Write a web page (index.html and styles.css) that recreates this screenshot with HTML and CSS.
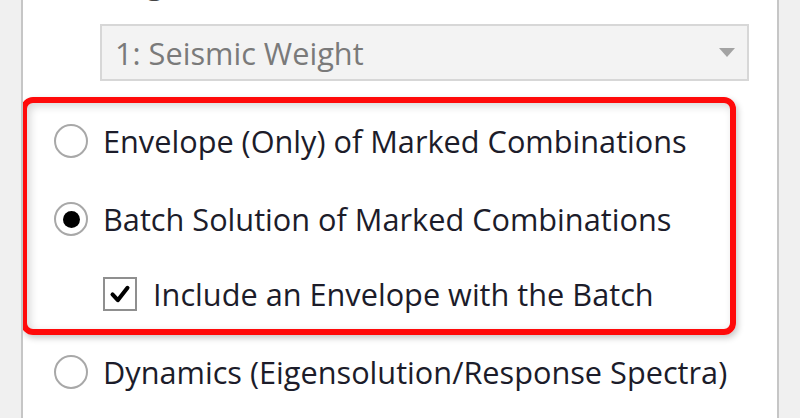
FILE: index.html
```html
<!DOCTYPE html>
<html lang="en">
<head>
    <meta charset="UTF-8">
    <title>Analysis Options</title>
    <link rel="stylesheet" href="styles.css">
</head>
<body>
    <div class="panel">
        <div class="group-label">Using</div>

        <div class="select">
            <span class="select-text">1: Seismic Weight</span>
            <span class="select-arrow"></span>
        </div>

        <div class="highlight">
            <div class="option row-first">
                <span class="radio"></span>
                <span class="option-text">Envelope (Only) of Marked Combinations</span>
            </div>
            <div class="option row-second">
                <span class="radio checked"></span>
                <span class="option-text">Batch Solution of Marked Combinations</span>
            </div>
            <div class="option row-check">
                <span class="checkbox">
                    <svg viewBox="0 0 34 34" width="34" height="34">
                        <path d="M8.5 17.5 L14.5 24 L25.5 10" fill="none" stroke="#000" stroke-width="4.6" stroke-linecap="round" stroke-linejoin="round"/>
                    </svg>
                </span>
                <span class="option-text">Include an Envelope with the Batch</span>
            </div>
        </div>

        <div class="option row-last">
            <span class="radio"></span>
            <span class="option-text">Dynamics (Eigensolution/Response Spectra)</span>
        </div>
    </div>
</body>
</html>
```

FILE: styles.css
```css
:root {
    --text-color: #1c1c2a;
    --muted-text: #7a7a7a;
    --panel-line: #c6c6c6;
    --control-border: #a8a8a8;
    --mark-red: #ff0a0a;
    --ui-font-size: 30.7px;
}

* {
    margin: 0;
    padding: 0;
    box-sizing: border-box;
}

body {
    background-color: #f0f0f0;
    font-family: 'Open Sans', 'Noto Sans', sans-serif;
    color: var(--text-color);
    overflow: hidden;
}

.panel {
    margin: 0 21px;
    height: 418px;
    overflow: hidden;
    background-color: white;
    border-left: 2px solid var(--panel-line);
    border-right: 2px solid var(--panel-line);
}

/* label above the dropdown, scrolled mostly out of view */
.group-label {
    height: 30px;
    margin-top: -30px;
    padding-left: 60px;
    font-size: var(--ui-font-size);
    line-height: 24px;
    color: #444;
}

.select {
    display: flex;
    align-items: center;
    justify-content: space-between;
    margin: 24px 0 0 77px;
    width: 649px;
    height: 57px;
    padding: 0 12px 0 13px;
    background-color: #f3f3f3;
    border: 2px solid #d7d7d7;
}

.select-text {
    font-size: var(--ui-font-size);
    color: var(--muted-text);
}

.select-arrow {
    width: 0;
    height: 0;
    border-left: 8px solid transparent;
    border-right: 8px solid transparent;
    border-top: 9px solid #a3a3a3;
}

.highlight {
    margin: 16px 0 0 -2px;
    width: 715px;
    height: 238px;
    border: 6px solid var(--mark-red);
    border-radius: 12px;
    box-shadow: inset 3px 3px 8px rgba(0,0,0,0.16), 2px 3px 6px rgba(0,0,0,0.22);
}

.option {
    display: flex;
    align-items: center;
    font-size: var(--ui-font-size);
}

.row-first {
    height: 76px;
    padding-left: 27px;
}

.row-second {
    height: 80px;
    padding-left: 27px;
}

.row-check {
    height: 70px;
    padding-left: 76px;
}

.row-last {
    height: 74px;
    padding-left: 31px;
}

.radio {
    flex: none;
    width: 34px;
    height: 34px;
    margin-right: 15px;
    border: 2px solid var(--control-border);
    border-radius: 50%;
    background-color: white;
    display: flex;
    align-items: center;
    justify-content: center;
}

.radio.checked::after {
    content: '';
    width: 17px;
    height: 17px;
    border-radius: 50%;
    background-color: #000;
}

.checkbox {
    flex: none;
    width: 34px;
    height: 34px;
    margin-right: 16px;
    border: 2px solid #8f8f8f;
    background-color: white;
    display: flex;
    align-items: center;
    justify-content: center;
}

.checkbox svg {
    display: block;
}
```
